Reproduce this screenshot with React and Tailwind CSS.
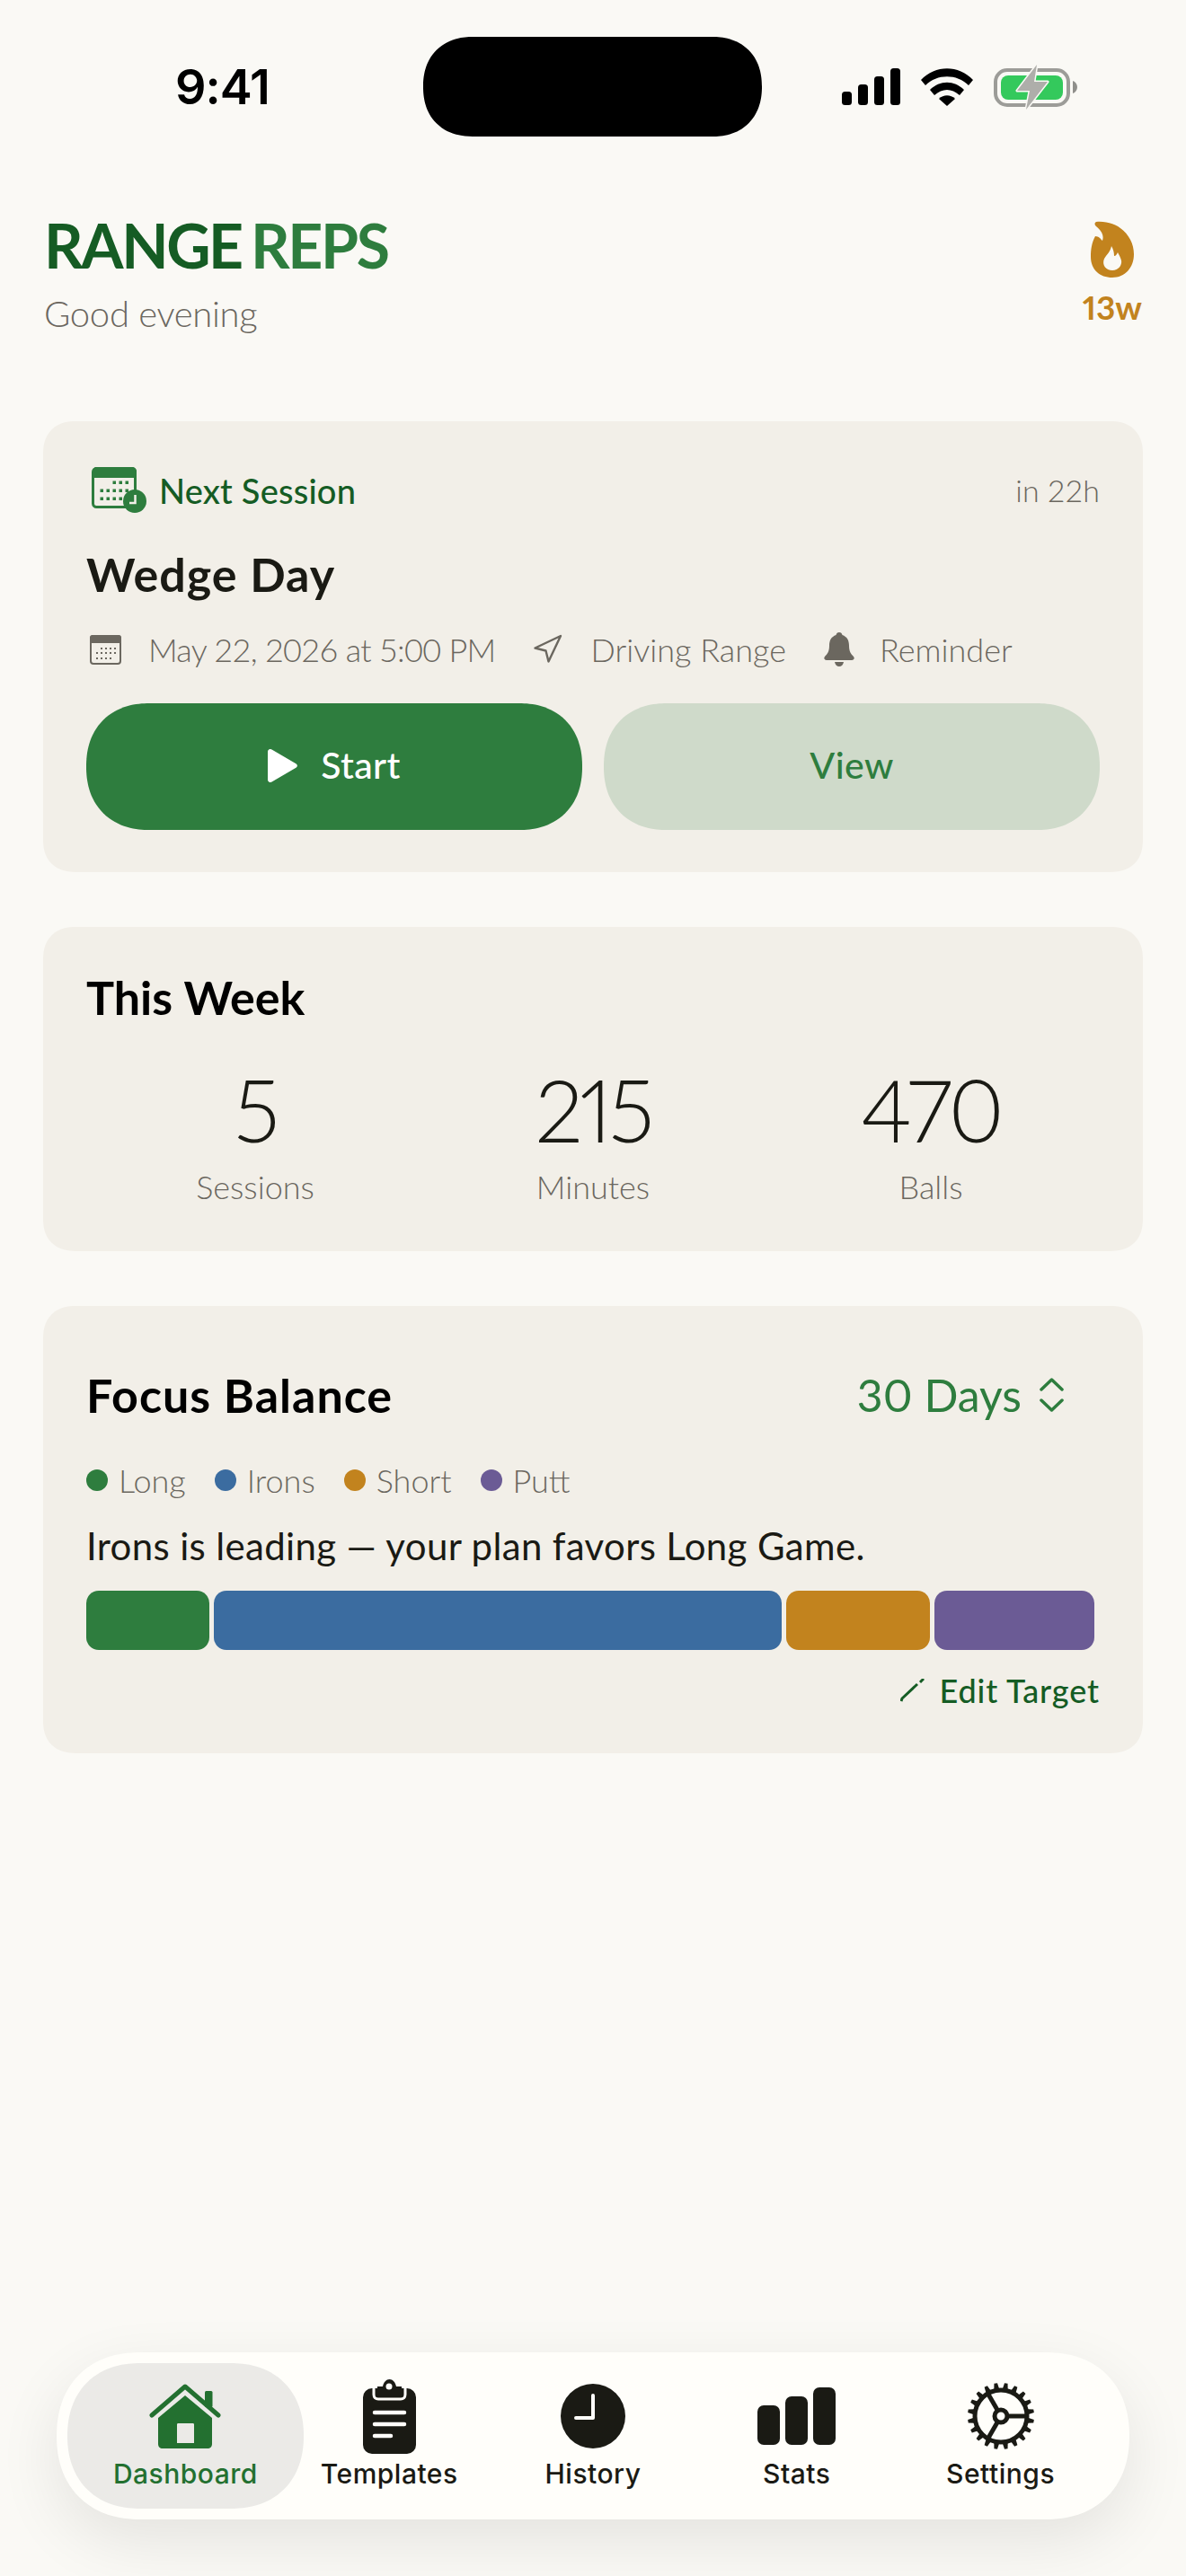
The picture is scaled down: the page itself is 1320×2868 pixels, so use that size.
import React from 'react';
import { Navigation } from 'lucide-react';

const DARK = '#1a1a14';

function StatusIcons() {
  return (
    <div className="flex items-center">
      <svg width="65" height="41" viewBox="0 0 65 41" fill="#000">
        <rect x="0" y="26" width="11" height="15" rx="3.5" />
        <rect x="18" y="18" width="11" height="23" rx="3.5" />
        <rect x="36" y="9" width="11" height="32" rx="3.5" />
        <rect x="54" y="0" width="11" height="41" rx="3.5" />
      </svg>
      <svg className="ml-[23px]" width="58" height="42" viewBox="0 0 58 42" fill="#000">
        <path d="M0 13 C16 -4 42 -4 58 13 L53 19 C40 6 18 6 5 19 Z" />
        <path d="M10 24 C21 13 37 13 48 24 L43 30 C34 22 24 22 15 30 Z" />
        <path d="M20 34 C25 29 33 29 38 34 L29 42 Z" />
      </svg>
      <svg className="ml-[23px]" width="93" height="50" viewBox="0 0 93 50">
        <rect x="2" y="6" width="81" height="39" rx="13" fill="none" stroke="#9c9c98" strokeWidth="4" />
        <rect x="8" y="12" width="69" height="27" rx="8" fill="#34c95c" />
        <path d="M88 18 C91 19 93 22 93 25 C93 28 91 31 88 32 Z" fill="#8f8f8b" />
        <path d="M48 0 L26 29 L40 29 L36 50 L60 19 L45 19 Z" fill="#aeaeaa" stroke="#faf9f5" strokeWidth="3" strokeLinejoin="round" paintOrder="stroke" />
      </svg>
    </div>
  );
}

function Flame() {
  return (
    <svg width="50" height="64" viewBox="0 0 50 64">
      <path d="M7 2 C5 3 5 5 7 7 C13 12 16 17 14 23 C12 21 10 18 6 18 C2 25 1 33 1 41 C1 55 11 64 25 64 C39 64 49 53 49 38 C49 18 32 0 7 2 Z" fill="#c2831e" />
      <path d="M24 29 C23 35 19 38 16 43 C13 50 18 56 25 56 C32 56 36 50 35 45 C34 41 32 38 31 36 C30 38 29 40 27 40 C27 36 26 32 24 29 Z" fill="#faf9f5" />
    </svg>
  );
}

function CalendarClock() {
  return (
    <svg width="61" height="51" viewBox="0 0 61 51">
      <rect x="1.5" y="1.5" width="47" height="43" rx="4" fill="none" stroke="#2e7d3e" strokeWidth="3" />
      <path d="M1 12 V5 C1 2 3 0 5 0 H45 C48 0 50 2 50 5 V12 Z" fill="#2e7d3e" />
      {[12, 21, 30].map((y, r) =>
        [11, 18, 25, 32, 39].slice(r === 0 ? 2 : 0, r === 2 ? 4 : 5).map((x) => (
          <rect key={`${x}-${y}`} x={x - 1.5} y={y + 5 - 1.5} width="3.5" height="3.5" fill="#2e7d3e" />
        ))
      )}
      <circle cx="48" cy="38" r="13" fill="#2e7d3e" />
      <path d="M48.5 31 V40 H42" fill="none" stroke="#f2efe8" strokeWidth="2.5" />
    </svg>
  );
}

function CalendarSmall() {
  return (
    <svg width="35" height="33" viewBox="0 0 35 33">
      <rect x="1" y="1" width="33" height="31" rx="3" fill="none" stroke="#6b675f" strokeWidth="2" />
      <path d="M0 9 V3 C0 1 1 0 3 0 H32 C34 0 35 1 35 3 V9 Z" fill="#6b675f" />
      {[15, 20, 26].map((y, r) =>
        [8, 13, 18, 23, 28].slice(r === 0 ? 1 : 0, r === 2 ? 4 : 5).map((x) => (
          <rect key={`${x}-${y}`} x={x - 1} y={y - 1} width="2" height="2" fill="#6b675f" />
        ))
      )}
    </svg>
  );
}

function Bell() {
  return (
    <svg width="34" height="38" viewBox="0 0 34 38" fill="#6b675f">
      <path d="M17 0 C19 0 20 1 20.5 3 C26 5 28 9 28 15 C28 21 30 24 33 27 C34.5 29 33.5 31 31 31 H3 C0.5 31 -0.5 29 1 27 C4 24 6 21 6 15 C6 9 8 5 13.5 3 C14 1 15 0 17 0 Z" />
      <path d="M12 33 H22 C21.5 36 19.5 38 17 38 C14.5 38 12.5 36 12 33 Z" />
    </svg>
  );
}

function Chevrons() {
  return (
    <svg width="29" height="38" viewBox="0 0 29 38" fill="none" stroke="#2e7d3e" strokeWidth="3.5" strokeLinecap="round" strokeLinejoin="round">
      <path d="M3 13 L14.5 2 L26 13" />
      <path d="M3 25 L14.5 36 L26 25" />
    </svg>
  );
}

function HomeIcon() {
  return (
    <svg width="82" height="72" viewBox="0 0 82 72">
      <path d="M4 35 L41 3 L78 35" fill="none" stroke="#237030" strokeWidth="5" strokeLinecap="round" strokeLinejoin="round" />
      <rect x="63" y="8" width="8.5" height="18" rx="1.5" fill="#237030" />
      <path fillRule="evenodd" d="M41 13 L71 38 V67 C71 70 69 72 66 72 H16 C13 72 11 70 11 67 V38 Z M32 45 V66 H51 V45 C51 44 50 44 49 44 H34 C33 44 32 44 32 45 Z" fill="#237030" />
    </svg>
  );
}

function ClipboardIcon() {
  return (
    <svg width="59" height="83" viewBox="0 0 59 83">
      <rect x="0" y="10" width="59" height="73" rx="10" fill={DARK} />
      <path d="M12 10 V17 C12 20 14 22 17 22 H42 C45 22 47 20 47 17 V10" fill={DARK} stroke="#fffefa" strokeWidth="3" />
      <path d="M16 8 H22 C23 3 26 0 29.5 0 C33 0 36 3 37 8 H43 V15 C43 17 42 18 40 18 H19 C17 18 16 17 16 15 Z" fill={DARK} />
      <circle cx="29" cy="8" r="3.5" fill="#fffefa" />
      <path d="M13 37 H46 M13 50 H46 M13 63 H31" stroke="#fffefa" strokeWidth="4.5" strokeLinecap="round" />
    </svg>
  );
}

function ClockIcon() {
  return (
    <svg width="72" height="72" viewBox="0 0 72 72">
      <circle cx="36" cy="36" r="36" fill={DARK} />
      <path d="M36 13 V38 H17" fill="none" stroke="#fffefa" strokeWidth="4" strokeLinecap="round" strokeLinejoin="round" />
    </svg>
  );
}

function StatsIcon() {
  return (
    <svg width="87" height="64" viewBox="0 0 87 64" fill={DARK}>
      <rect x="0" y="20" width="25" height="44" rx="7" />
      <rect x="31" y="10" width="25" height="54" rx="7" />
      <rect x="62" y="0" width="25" height="64" rx="7" />
    </svg>
  );
}

function GearIcon() {
  const teeth = Array.from({ length: 20 }, (_, i) => i * 18 + 9);
  return (
    <svg width="76" height="76" viewBox="-38 -38 76 76">
      {teeth.map((a) => (
        <path key={a} d="M-3 -30 L-1.8 -37 H1.8 L3 -30 Z" transform={`rotate(${a})`} fill={DARK} />
      ))}
      <circle r="29" fill="none" stroke={DARK} strokeWidth="5" />
      <circle r="7" fill="none" stroke={DARK} strokeWidth="5" />
      {[90, 210, 330].map((a) => (
        <path key={a} d="M0 -8 V-30" transform={`rotate(${a})`} stroke={DARK} strokeWidth="5" />
      ))}
    </svg>
  );
}

const legend = [
  { label: 'Long', dot: 'bg-[#2e7d3e]' },
  { label: 'Irons', dot: 'bg-[#3b6ca0]' },
  { label: 'Short', dot: 'bg-[#c2831e]' },
  { label: 'Putt', dot: 'bg-[#6b5b95]' },
];

const stats = [
  { value: '5', label: 'Sessions' },
  { value: '215', label: 'Minutes' },
  { value: '470', label: 'Balls' },
];

const tabs = [
  { label: 'Dashboard', icon: <HomeIcon />, active: true },
  { label: 'Templates', icon: <ClipboardIcon /> },
  { label: 'History', icon: <ClockIcon /> },
  { label: 'Stats', icon: <StatsIcon /> },
  { label: 'Settings', icon: <GearIcon /> },
];

export default function App() {
  return (
    <div className="h-[2868px] w-[1320px] flex flex-col bg-[#faf9f5] font-['Lato',sans-serif] text-[#1a1a14]">
      {/* Status bar */}
      <div className="flex items-center pt-[41px] pl-[195px]">
        <span className="w-[106px] font-['Inter',sans-serif] text-[54px] leading-[111px] font-semibold tracking-[-1px] text-black">9:41</span>
        <div className="ml-[170px] w-[377px] h-[111px] rounded-[55px] [corner-shape:superellipse(1.15)] bg-black" />
        <div className="ml-[89px]">
          <StatusIcons />
        </div>
      </div>

      {/* Header */}
      <div className="flex justify-between mt-[86px] px-[49px]">
        <div>
          <h1 className="text-[68px] leading-[70px] font-bold tracking-[-2.4px] [word-spacing:-4px]">
            <span className="text-[#155c24]">RANGE</span> <span className="text-[#2e7d3e]">REPS</span>
          </h1>
          <p className="mt-[18px] text-[40px] leading-[46px] font-light tracking-[-0.3px] text-[#6b675f]">Good evening</p>
        </div>
        <div className="flex flex-col items-center pt-[7px]">
          <Flame />
          <span className="mt-[13px] text-[37px] leading-[40px] font-bold proportional-nums text-[#c2831e]">13w</span>
        </div>
      </div>

      {/* Cards */}
      <div className="flex flex-col gap-[61px] mt-[97px] px-[48px]">
        <section className="rounded-[36px] [corner-shape:superellipse(1.2)] bg-[#f2efe8] pt-[51px] pb-[47px] px-[48px]">
          <div className="flex items-center justify-between">
            <div className="flex items-center gap-[14px] pl-[6px]">
              <CalendarClock />
              <span className="text-[38px] leading-[50px] font-medium tracking-[0.2px] text-[#155c24]">Next Session</span>
            </div>
            <span className="text-[34px] leading-[50px] font-light text-[#6b675f]">in 22h</span>
          </div>
          <h2 className="mt-[38px] text-[52px] leading-[60px] font-bold tracking-[1px]">Wedge Day</h2>
          <div className="flex items-center mt-[34px] h-[40px] text-[36px] font-light text-[#6b675f]">
            <span className="ml-[4px]"><CalendarSmall /></span>
            <span className="ml-[30px] tracking-[-0.7px]">May 22, 2026 at 5:00 PM</span>
            <Navigation className="ml-[39px]" size={36} strokeWidth={1.6} />
            <span className="ml-[31px]">Driving Range</span>
            <span className="ml-[42px]"><Bell /></span>
            <span className="ml-[28px]">Reminder</span>
          </div>
          <div className="grid grid-cols-2 gap-[24px] mt-[40px]">
            <button className="flex items-center justify-center gap-[26px] h-[141px] pb-[3px] rounded-[70px] [corner-shape:superellipse(1.15)] bg-[#2e7d3e] text-[41px] font-medium tracking-[0.4px] text-white">
              <svg width="33" height="37" viewBox="0 0 33 37" fill="#fff">
                <path d="M0 3 C0 0.5 2.5 -0.8 4.5 0.5 L31 16 C33.5 17.5 33.5 19.5 31 21 L4.5 36.5 C2.5 37.8 0 36.5 0 34 Z" />
              </svg>
              Start
            </button>
            <button className="h-[141px] pb-[3px] rounded-[70px] [corner-shape:superellipse(1.15)] bg-[#cfdaca] text-[41px] font-medium tracking-[0.4px] text-[#2e7d3e]">View</button>
          </div>
        </section>

        <section className="rounded-[36px] [corner-shape:superellipse(1.2)] bg-[#f2efe8] pt-[48px] pb-[50px] px-[48px]">
          <h2 className="text-[52px] leading-[60px] font-bold text-black">This Week</h2>
          <div className="grid grid-cols-3 mt-[45px]">
            {stats.map((s) => (
              <div key={s.label} className="flex flex-col items-center">
                <span className="text-[96px] leading-[100px] font-light proportional-nums tracking-[-4px]">{s.value}</span>
                <span className="mt-[14px] text-[36px] leading-[44px] font-light text-[#6b675f]">{s.label}</span>
              </div>
            ))}
          </div>
        </section>

        <section className="rounded-[36px] [corner-shape:superellipse(1.2)] bg-[#f2efe8] pt-[69px] pb-[48px] px-[48px]">
          <div className="flex items-center justify-between pr-[39px]">
            <h2 className="text-[52px] leading-[60px] font-bold tracking-[1px] text-black">Focus Balance</h2>
            <div className="flex items-center gap-[19px]">
              <span className="text-[50px] leading-[60px] proportional-nums text-[#2e7d3e]">30 Days</span>
              <Chevrons />
            </div>
          </div>
          <div className="flex gap-[32px] mt-[43px]">
            {legend.map((l) => (
              <div key={l.label} className="flex items-center gap-[12px]">
                <span className={`w-[24px] h-[24px] rounded-full ${l.dot}`} />
                <span className="text-[36px] leading-[44px] font-light text-[#6b675f]">{l.label}</span>
              </div>
            ))}
          </div>
          <p className="mt-[26px] text-[42px] leading-[50px] tracking-[0.35px]">Irons is leading — your plan favors Long Game.</p>
          <div className="flex gap-[5px] mt-[25px] h-[66px] w-[1122px]">
            <div className="w-[137px] rounded-[14px] bg-[#2e7d3e]" />
            <div className="w-[632px] rounded-[14px] bg-[#3b6ca0]" />
            <div className="w-[160px] rounded-[14px] bg-[#c2831e]" />
            <div className="w-[178px] rounded-[14px] bg-[#6b5b95]" />
          </div>
          <div className="flex items-center justify-end gap-[16px] mt-[23px]">
            <svg width="27" height="26" viewBox="0 0 27 26" fill="none" stroke="#155c24" strokeWidth="3">
              <path d="M1 25 L2 22 L19 6" />
              <path d="M22 4 L26 0" />
            </svg>
            <span className="text-[36px] leading-[44px] font-medium tracking-[0.9px] text-[#155c24]">Edit Target</span>
          </div>
        </section>
      </div>

      {/* Tab bar */}
      <nav className="mt-auto mb-[63px] mx-[63px] h-[186px] rounded-[93px] [corner-shape:superellipse(1.15)] bg-[#fffefa] shadow-[0_24px_70px_rgba(0,0,0,0.09)] grid grid-cols-5 px-[30px] font-['Inter',sans-serif]">
        {tabs.map((t) => (
          <div key={t.label} className="relative flex flex-col items-center">
            {t.active && <div className="absolute top-[12px] -left-[18px] -right-[18px] h-[162px] rounded-[81px] [corner-shape:superellipse(1.15)] bg-[#ebeae7]" />}
            <div className="relative flex items-center justify-center h-[100px] mt-[21px]">{t.icon}</div>
            <span className={`relative -mt-[4px] text-[30px] leading-[36px] font-medium tracking-[0.5px] ${t.active ? 'text-[#237030]' : 'text-[#1a1a14]'}`}>{t.label}</span>
          </div>
        ))}
      </nav>
    </div>
  );
}
